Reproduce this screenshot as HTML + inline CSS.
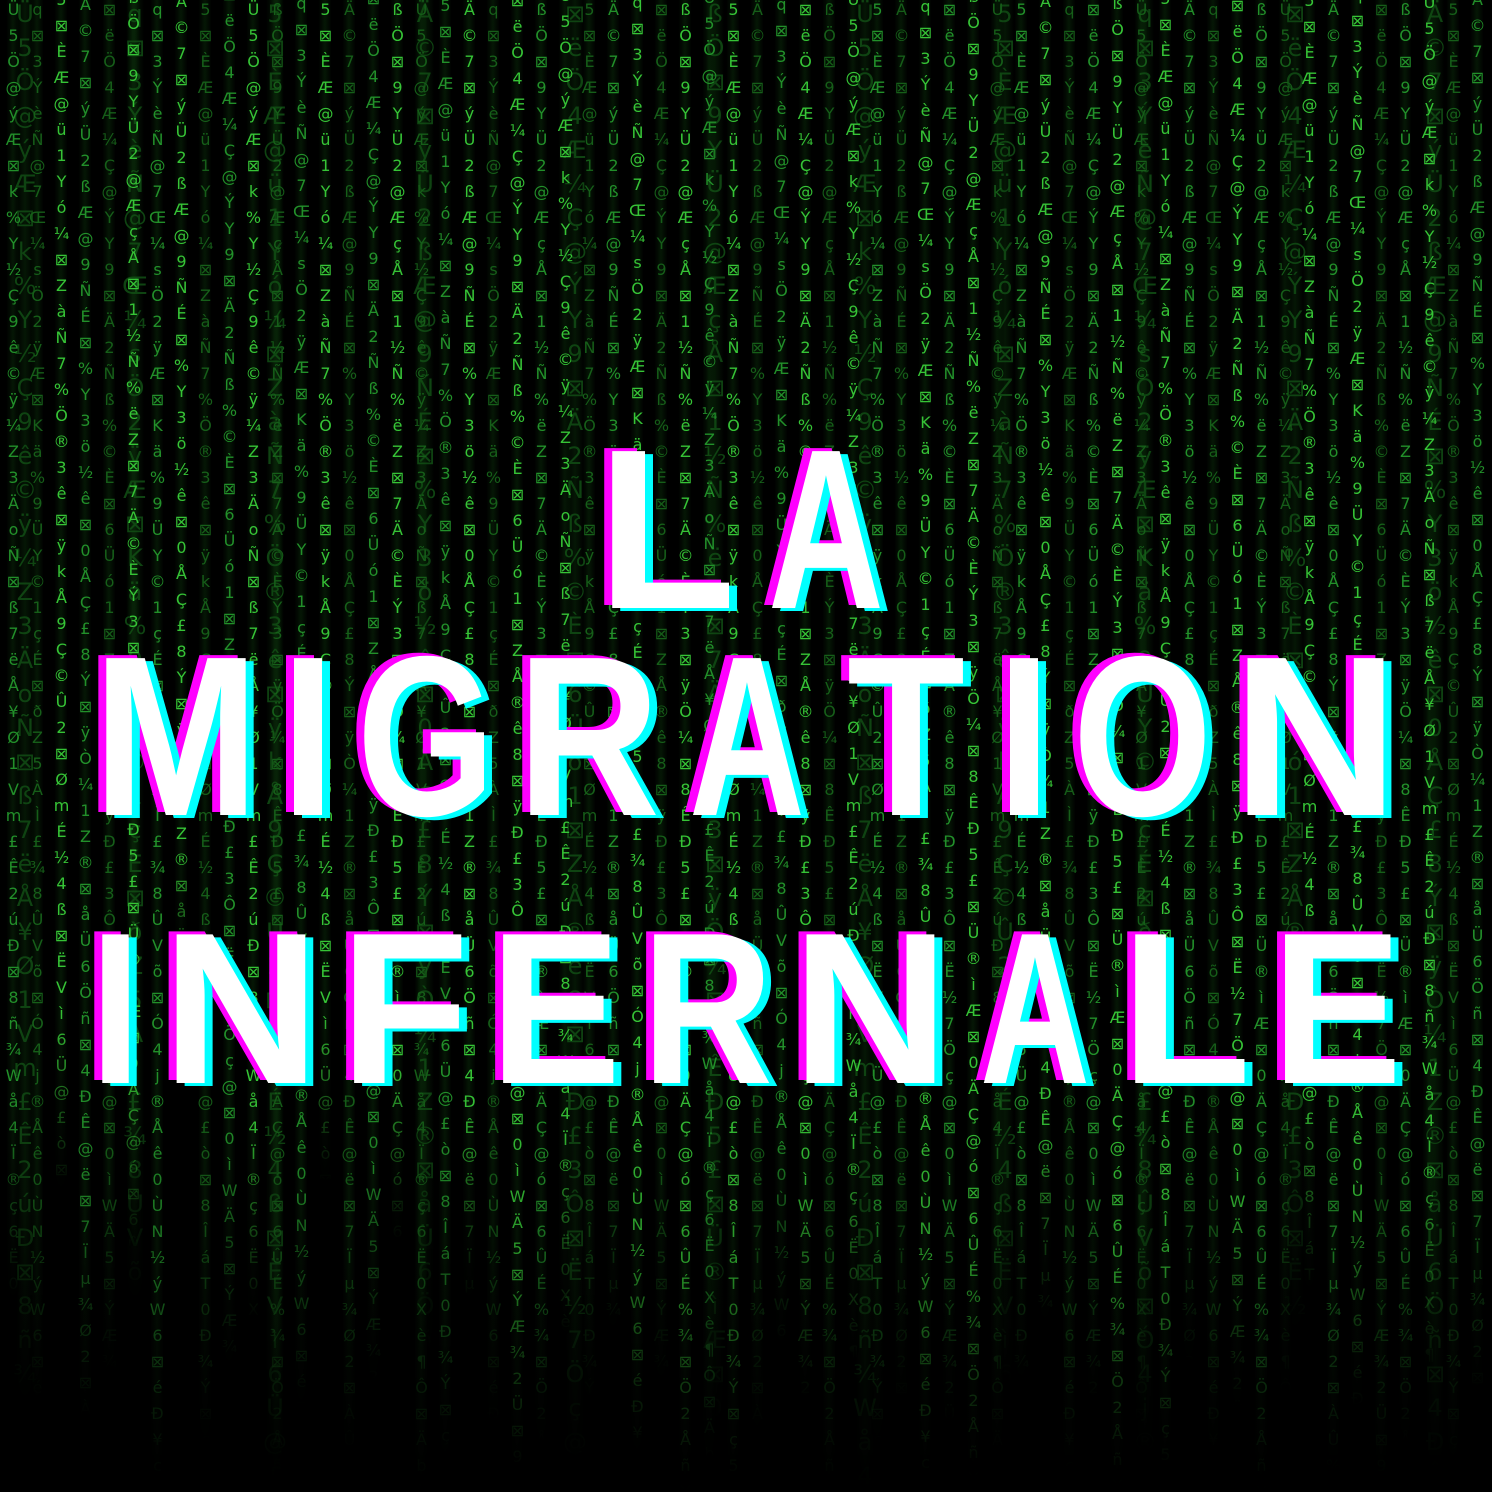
<!DOCTYPE html>
<html><head><meta charset="utf-8">
<style>
html,body{margin:0;padding:0;background:#000;width:1492px;height:1492px;overflow:hidden}
#bg{position:absolute;left:0;top:0;width:1492px;height:1492px;overflow:hidden;background:#000}
.c{position:absolute;top:0;width:22px;writing-mode:vertical-lr;text-orientation:upright;white-space:nowrap;letter-spacing:7px;line-height:22px;font-family:"DejaVu Sans","Liberation Sans",sans-serif;font-size:16px;overflow:hidden;
background:linear-gradient(90deg,transparent 20%,rgba(20,90,20,.25) 50%,transparent 80%);
-webkit-mask-image:linear-gradient(180deg,#000 85%,transparent);mask-image:linear-gradient(180deg,#000 85%,transparent)}
.b{color:#36c436}
.m{color:#22902a}
.d{color:#165e19}
.f{color:#0f4412;font-size:24px;letter-spacing:6px;line-height:30px;width:30px}
#fade{position:absolute;left:0;top:0;width:1492px;height:1492px;background:linear-gradient(180deg,rgba(0,0,0,0) 72%,rgba(0,0,0,.55) 100%)}
svg{position:absolute;left:0;top:0}
svg text{font-family:"Liberation Sans",sans-serif;font-weight:bold}
</style></head><body>
<div id="bg">
<div class="c f" style="left:10px;height:1400px">Ü5Ö@ýÆ⊠k%Y½Ç9ê©ÿ¼Z3ÄoÑ⊠ß7ëÅ¥Ø1Vm£Ê2úÐ⊠8ñ¾Wå4Ï®ç6Ë0Xè</div>
<div class="c f" style="left:120px;height:1300px">q⊠3ÝèÑ@7Œ¼sÖ2ÿÆ⊠Kä%9ÜY©1çÉ⊠ðZ5ÀÌ£¾8ÛVõ⊠Ó4j®Åê0ÙN½ý</div>
<div class="c f" style="left:260px;height:1480px">5⊠ÈÆ@ü1Yó¼⊠ZàÑ7%Ö®3ê⊠ÿkÅ9Ç©Û2⊠ØmÉ½4ß⊠ËVì6Ü@£ò⊠8ÎáT0Ð¾Ý⊠ç5Ä%èW⊠1</div>
<div class="c f" style="left:410px;height:1350px">Ä©7⊠ýÜ2ßÆ@9ÑÉ⊠%Y3ö½ê⊠0ÅÇ£8Ý⊠ÿÒ¼1Z®⊠åÜ6Öñ⊠4ÐÊ@ë⊠7Ïµ¾Ø2⊠ÀÛ%</div>
<div class="c f" style="left:560px;height:1460px">⊠ëÖ4Æ¼Ç@ÝY9⊠Ä2Ñß%©È⊠6Üó1⊠ZÅ®ê8⊠ÿÐ£3Ô⊠Ë½7Öç@⊠0ìWÄ5⊠ÝÆ¾2Ü⊠9</div>
<div class="c f" style="left:700px;height:1420px">ßÖ⊠9YÜ2@ÆçÅ⊠1½Ñ%ëZ⊠7Ä©ÈÝ3⊠ÿÖ¼⊠8ÊÐ5£⊠Ü®ìÆ⊠0ÄÇ@ó⊠6ÛÉ%¾⊠Ö2ÅñY⊠4</div>
<div class="c f" style="left:850px;height:1490px">Ü5Ö@ýÆ⊠k%Y½Ç9ê©ÿ¼Z3ÄoÑ⊠ß7ëÅ¥Ø1Vm£Ê2úÐ⊠8ñ¾Wå4Ï®ç6Ë0Xè¶Ô⊠Äb</div>
<div class="c f" style="left:990px;height:1380px">5⊠ÈÆ@ü1Yó¼⊠ZàÑ7%Ö®3ê⊠ÿkÅ9Ç©Û2⊠ØmÉ½4ß⊠ËVì6Ü@£ò⊠8ÎáT0Ð¾Ý⊠ç5</div>
<div class="c f" style="left:1130px;height:1450px">q⊠3ÝèÑ@7Œ¼sÖ2ÿÆ⊠Kä%9ÜY©1çÉ⊠ðZ5ÀÌ£¾8ÛVõ⊠Ó4j®Åê0ÙN½ýW6⊠é</div>
<div class="c f" style="left:1280px;height:1330px">⊠ëÖ4Æ¼Ç@ÝY9⊠Ä2Ñß%©È⊠6Üó1⊠ZÅ®ê8⊠ÿÐ£3Ô⊠Ë½7Öç@⊠0ìWÄ5⊠Ý</div>
<div class="c f" style="left:1420px;height:1470px">Ä©7⊠ýÜ2ßÆ@9ÑÉ⊠%Y3ö½ê⊠0ÅÇ£8Ý⊠ÿÒ¼1Z®⊠åÜ6Öñ⊠4ÐÊ@ë⊠7Ïµ¾Ø2⊠ÀÛ%Ç9</div>

<div class="c m" style="left:2px;height:1300px">Ü5Ö@ýÆ⊠k%Y½Ç9ê©ÿ¼Z3ÄoÑ⊠ß7ëÅ¥Ø1Vm£Ê2úÐ⊠8ñ¾Wå4Ï®ç6Ë0Xè¶Ô⊠Äbù1Ý%Ÿ8ìÂ©qÈ5⊠ÎTó¼2ÐaÆ7Ü</div>
<div class="c d" style="left:26px;height:1400px">q⊠3ÝèÑ@7Œ¼sÖ2ÿÆ⊠Kä%9ÜY©1çÉ⊠ðZ5ÀÌ£¾8ÛVõ⊠Ó4j®Åê0ÙN½ýW6⊠éÐ¥cÂ2Ï§ò⊠9Ü@xÄ7ÍÆ1ñ⊠Ê3ß</div>
<div class="c b" style="left:50px;height:1200px;top:-10px">5⊠ÈÆ@ü1Yó¼⊠ZàÑ7%Ö®3ê⊠ÿkÅ9Ç©Û2⊠ØmÉ½4ß⊠ËVì6Ü@£ò⊠8ÎáT0Ð¾Ý⊠ç5Ä%èW⊠1ÔÆ¥û3⊠Zñ©Ö7ß⊠</div>
<div class="c m" style="left:74px;height:1420px;top:-5px">Ä©7⊠ýÜ2ßÆ@9ÑÉ⊠%Y3ö½ê⊠0ÅÇ£8Ý⊠ÿÒ¼1Z®⊠åÜ6Öñ⊠4ÐÊ@ë⊠7Ïµ¾Ø2⊠ÀÛ%Ç9⊠kÆ5è©⊠Ü1Ü5Ö@ýÆ⊠</div>
<div class="c d" style="left:98px;height:1370px">⊠ëÖ4Æ¼Ç@ÝY9⊠Ä2Ñß%©È⊠6Üó1⊠ZÅ®ê8⊠ÿÐ£3Ô⊠Ë½7Öç@⊠0ìWÄ5⊠ÝÆ¾2Ü⊠9ÏñÆ%⊠ØË4q⊠3ÝèÑ@7</div>
<div class="c b" style="left:122px;height:1260px;top:-12px">ßÖ⊠9YÜ2@ÆçÅ⊠1½Ñ%ëZ⊠7Ä©ÈÝ3⊠ÿÖ¼⊠8ÊÐ5£⊠Ü®ìÆ⊠0ÄÇ@ó⊠6ÛÉ%¾⊠Ö2ÅñY⊠4Ü5Ö@ýÆ⊠k%Y½Ç</div>
<div class="c m" style="left:146px;height:1480px">q⊠3ÝèÑ@7Œ¼sÖ2ÿÆ⊠Kä%9ÜY©1çÉ⊠ðZ5ÀÌ£¾8ÛVõ⊠Ó4j®Åê0ÙN½ýW6⊠éÐ¥cÂ2Ï§ò⊠9Ü@xÄ7ÍÆ1ñ⊠Ê3ß</div>
<div class="c b" style="left:170px;height:1000px;top:-8px">Ä©7⊠ýÜ2ßÆ@9ÑÉ⊠%Y3ö½ê⊠0ÅÇ£8Ý⊠ÿÒ¼1Z®⊠åÜ6Öñ⊠4ÐÊ@ë⊠7Ïµ¾Ø2⊠ÀÛ%Ç9</div>
<div class="c d" style="left:194px;height:1440px">5⊠ÈÆ@ü1Yó¼⊠ZàÑ7%Ö®3ê⊠ÿkÅ9Ç©Û2⊠ØmÉ½4ß⊠ËVì6Ü@£ò⊠8ÎáT0Ð¾Ý⊠ç5Ä%èW⊠1ÔÆ¥û3⊠Zñ©Ö7ß⊠</div>
<div class="c m" style="left:218px;height:1380px;top:-15px">⊠ëÖ4Æ¼Ç@ÝY9⊠Ä2Ñß%©È⊠6Üó1⊠ZÅ®ê8⊠ÿÐ£3Ô⊠Ë½7Öç@⊠0ìWÄ5⊠ÝÆ¾2Ü⊠9ÏñÆ%⊠ØË4ßÖ⊠9YÜ2@</div>
<div class="c b" style="left:242px;height:1320px">Ü5Ö@ýÆ⊠k%Y½Ç9ê©ÿ¼Z3ÄoÑ⊠ß7ëÅ¥Ø1Vm£Ê2úÐ⊠8ñ¾Wå4Ï®ç6Ë0Xè¶Ô⊠Äbù1Ý%Ÿ8ìÂ©qÈ5⊠ÎTó¼</div>
<div class="c d" style="left:266px;height:1470px">ßÖ⊠9YÜ2@ÆçÅ⊠1½Ñ%ëZ⊠7Ä©ÈÝ3⊠ÿÖ¼⊠8ÊÐ5£⊠Ü®ìÆ⊠0ÄÇ@ó⊠6ÛÉ%¾⊠Ö2ÅñY⊠4Ä©7⊠ýÜ2ßÆ@9</div>
<div class="c m" style="left:290px;height:1410px;top:-6px">q⊠3ÝèÑ@7Œ¼sÖ2ÿÆ⊠Kä%9ÜY©1çÉ⊠ðZ5ÀÌ£¾8ÛVõ⊠Ó4j®Åê0ÙN½ýW6⊠éÐ¥cÂ2Ï§ò⊠9Ü@xÄ7ÍÆ1ñ⊠</div>
<div class="c b" style="left:314px;height:1180px">5⊠ÈÆ@ü1Yó¼⊠ZàÑ7%Ö®3ê⊠ÿkÅ9Ç©Û2⊠ØmÉ½4ß⊠ËVì6Ü@£ò⊠8ÎáT0Ð¾Ý⊠ç5Ä%èW⊠1ÔÆ¥û3</div>
<div class="c d" style="left:338px;height:1450px">Ä©7⊠ýÜ2ßÆ@9ÑÉ⊠%Y3ö½ê⊠0ÅÇ£8Ý⊠ÿÒ¼1Z®⊠åÜ6Öñ⊠4ÐÊ@ë⊠7Ïµ¾Ø2⊠ÀÛ%Ç9⊠kÆ5è©⊠Ü1ßÖ⊠9Y</div>
<div class="c m" style="left:362px;height:1390px;top:-11px">⊠ëÖ4Æ¼Ç@ÝY9⊠Ä2Ñß%©È⊠6Üó1⊠ZÅ®ê8⊠ÿÐ£3Ô⊠Ë½7Öç@⊠0ìWÄ5⊠ÝÆ¾2Ü⊠9ÏñÆ%⊠ØË4Ü5Ö@ýÆ⊠</div>
<div class="c b" style="left:386px;height:1240px">ßÖ⊠9YÜ2@ÆçÅ⊠1½Ñ%ëZ⊠7Ä©ÈÝ3⊠ÿÖ¼⊠8ÊÐ5£⊠Ü®ìÆ⊠0ÄÇ@ó⊠6ÛÉ%¾⊠Ö2ÅñY⊠4q⊠3ÝèÑ@7Œ</div>
<div class="c d" style="left:410px;height:1490px">Ü5Ö@ýÆ⊠k%Y½Ç9ê©ÿ¼Z3ÄoÑ⊠ß7ëÅ¥Ø1Vm£Ê2úÐ⊠8ñ¾Wå4Ï®ç6Ë0Xè¶Ô⊠Äbù1Ý%Ÿ8ìÂ©qÈ5⊠ÎTó¼2ÐaÆ7Ü</div>
<div class="c m" style="left:434px;height:1460px;top:-4px">5⊠ÈÆ@ü1Yó¼⊠ZàÑ7%Ö®3ê⊠ÿkÅ9Ç©Û2⊠ØmÉ½4ß⊠ËVì6Ü@£ò⊠8ÎáT0Ð¾Ý⊠ç5Ä%èW⊠1ÔÆ¥û3⊠Zñ©Ö7ß⊠</div>
<div class="c b" style="left:458px;height:1300px">Ä©7⊠ýÜ2ßÆ@9ÑÉ⊠%Y3ö½ê⊠0ÅÇ£8Ý⊠ÿÒ¼1Z®⊠åÜ6Öñ⊠4ÐÊ@ë⊠7Ïµ¾Ø2⊠ÀÛ%Ç9⊠kÆ5è©⊠</div>
<div class="c d" style="left:482px;height:1420px">q⊠3ÝèÑ@7Œ¼sÖ2ÿÆ⊠Kä%9ÜY©1çÉ⊠ðZ5ÀÌ£¾8ÛVõ⊠Ó4j®Åê0ÙN½ýW6⊠éÐ¥cÂ2Ï§ò⊠9Ü@xÄ7ÍÆ1ñ⊠Ê3ß</div>
<div class="c b" style="left:506px;height:1480px;top:-9px">⊠ëÖ4Æ¼Ç@ÝY9⊠Ä2Ñß%©È⊠6Üó1⊠ZÅ®ê8⊠ÿÐ£3Ô⊠Ë½7Öç@⊠0ìWÄ5⊠ÝÆ¾2Ü⊠9ÏñÆ%⊠ØË4ßÖ⊠9YÜ2@</div>
<div class="c m" style="left:530px;height:1440px">ßÖ⊠9YÜ2@ÆçÅ⊠1½Ñ%ëZ⊠7Ä©ÈÝ3⊠ÿÖ¼⊠8ÊÐ5£⊠Ü®ìÆ⊠0ÄÇ@ó⊠6ÛÉ%¾⊠Ö2ÅñY⊠4Ü5Ö@ýÆ⊠k%Y½Ç</div>
<div class="c b" style="left:554px;height:1350px;top:-14px">Ü5Ö@ýÆ⊠k%Y½Ç9ê©ÿ¼Z3ÄoÑ⊠ß7ëÅ¥Ø1Vm£Ê2úÐ⊠8ñ¾Wå4Ï®ç6Ë0Xè¶Ô⊠Äbù1Ý%Ÿ8ìÂ©qÈ5⊠ÎTó¼2Ð</div>
<div class="c d" style="left:578px;height:1400px">5⊠ÈÆ@ü1Yó¼⊠ZàÑ7%Ö®3ê⊠ÿkÅ9Ç©Û2⊠ØmÉ½4ß⊠ËVì6Ü@£ò⊠8ÎáT0Ð¾Ý⊠ç5Ä%èW⊠1ÔÆ¥û3⊠Zñ©Ö7ß⊠</div>
<div class="c m" style="left:602px;height:1330px">Ä©7⊠ýÜ2ßÆ@9ÑÉ⊠%Y3ö½ê⊠0ÅÇ£8Ý⊠ÿÒ¼1Z®⊠åÜ6Öñ⊠4ÐÊ@ë⊠7Ïµ¾Ø2⊠ÀÛ%Ç9⊠kÆ5è©⊠Ü1q⊠3Ýè</div>
<div class="c b" style="left:626px;height:1460px;top:-7px">q⊠3ÝèÑ@7Œ¼sÖ2ÿÆ⊠Kä%9ÜY©1çÉ⊠ðZ5ÀÌ£¾8ÛVõ⊠Ó4j®Åê0ÙN½ýW6⊠éÐ¥cÂ2Ï§ò⊠9Ü@xÄ7ÍÆ1ñ⊠</div>
<div class="c d" style="left:650px;height:1380px">⊠ëÖ4Æ¼Ç@ÝY9⊠Ä2Ñß%©È⊠6Üó1⊠ZÅ®ê8⊠ÿÐ£3Ô⊠Ë½7Öç@⊠0ìWÄ5⊠ÝÆ¾2Ü⊠9ÏñÆ%⊠ØË4Ü5Ö@ýÆ⊠</div>
<div class="c b" style="left:674px;height:1490px">ßÖ⊠9YÜ2@ÆçÅ⊠1½Ñ%ëZ⊠7Ä©ÈÝ3⊠ÿÖ¼⊠8ÊÐ5£⊠Ü®ìÆ⊠0ÄÇ@ó⊠6ÛÉ%¾⊠Ö2ÅñY⊠4Ä©7⊠ýÜ2ßÆ@9</div>
<div class="c m" style="left:698px;height:1470px;top:-12px">Ü5Ö@ýÆ⊠k%Y½Ç9ê©ÿ¼Z3ÄoÑ⊠ß7ëÅ¥Ø1Vm£Ê2úÐ⊠8ñ¾Wå4Ï®ç6Ë0Xè¶Ô⊠Äbù1Ý%Ÿ8ìÂ©qÈ5⊠ÎTó¼</div>
<div class="c b" style="left:722px;height:1480px">5⊠ÈÆ@ü1Yó¼⊠ZàÑ7%Ö®3ê⊠ÿkÅ9Ç©Û2⊠ØmÉ½4ß⊠ËVì6Ü@£ò⊠8ÎáT0Ð¾Ý⊠ç5Ä%èW⊠1ÔÆ¥û3⊠Zñ©Ö7ß⊠</div>
<div class="c d" style="left:746px;height:1430px">Ä©7⊠ýÜ2ßÆ@9ÑÉ⊠%Y3ö½ê⊠0ÅÇ£8Ý⊠ÿÒ¼1Z®⊠åÜ6Öñ⊠4ÐÊ@ë⊠7Ïµ¾Ø2⊠ÀÛ%Ç9⊠kÆ5è©⊠Ü1ßÖ⊠9Y</div>
<div class="c m" style="left:770px;height:1350px;top:-5px">q⊠3ÝèÑ@7Œ¼sÖ2ÿÆ⊠Kä%9ÜY©1çÉ⊠ðZ5ÀÌ£¾8ÛVõ⊠Ó4j®Åê0ÙN½ýW6⊠éÐ¥cÂ2Ï§ò⊠9Ü@xÄ7ÍÆ1ñ⊠Ê3ß</div>
<div class="c b" style="left:794px;height:1400px">⊠ëÖ4Æ¼Ç@ÝY9⊠Ä2Ñß%©È⊠6Üó1⊠ZÅ®ê8⊠ÿÐ£3Ô⊠Ë½7Öç@⊠0ìWÄ5⊠ÝÆ¾2Ü⊠9ÏñÆ%⊠ØË4ßÖ⊠9YÜ2@</div>
<div class="c d" style="left:818px;height:1490px">ßÖ⊠9YÜ2@ÆçÅ⊠1½Ñ%ëZ⊠7Ä©ÈÝ3⊠ÿÖ¼⊠8ÊÐ5£⊠Ü®ìÆ⊠0ÄÇ@ó⊠6ÛÉ%¾⊠Ö2ÅñY⊠4Ü5Ö@ýÆ⊠k%Y½Ç</div>
<div class="c b" style="left:842px;height:1370px;top:-10px">Ü5Ö@ýÆ⊠k%Y½Ç9ê©ÿ¼Z3ÄoÑ⊠ß7ëÅ¥Ø1Vm£Ê2úÐ⊠8ñ¾Wå4Ï®ç6Ë0Xè¶Ô⊠Äbù1Ý%Ÿ8ìÂ©qÈ5⊠ÎTó¼2Ð</div>
<div class="c m" style="left:866px;height:1440px">5⊠ÈÆ@ü1Yó¼⊠ZàÑ7%Ö®3ê⊠ÿkÅ9Ç©Û2⊠ØmÉ½4ß⊠ËVì6Ü@£ò⊠8ÎáT0Ð¾Ý⊠ç5Ä%èW⊠1ÔÆ¥û3⊠Zñ©Ö7ß⊠</div>
<div class="c d" style="left:890px;height:1400px">Ä©7⊠ýÜ2ßÆ@9ÑÉ⊠%Y3ö½ê⊠0ÅÇ£8Ý⊠ÿÒ¼1Z®⊠åÜ6Öñ⊠4ÐÊ@ë⊠7Ïµ¾Ø2⊠ÀÛ%Ç9⊠kÆ5è©⊠Ü1q⊠3Ýè</div>
<div class="c b" style="left:914px;height:1480px;top:-3px">q⊠3ÝèÑ@7Œ¼sÖ2ÿÆ⊠Kä%9ÜY©1çÉ⊠ðZ5ÀÌ£¾8ÛVõ⊠Ó4j®Åê0ÙN½ýW6⊠éÐ¥cÂ2Ï§ò⊠9Ü@xÄ7ÍÆ1ñ⊠</div>
<div class="c m" style="left:938px;height:1420px">⊠ëÖ4Æ¼Ç@ÝY9⊠Ä2Ñß%©È⊠6Üó1⊠ZÅ®ê8⊠ÿÐ£3Ô⊠Ë½7Öç@⊠0ìWÄ5⊠ÝÆ¾2Ü⊠9ÏñÆ%⊠ØË4Ü5Ö@ýÆ⊠</div>
<div class="c b" style="left:962px;height:1490px;top:-13px">ßÖ⊠9YÜ2@ÆçÅ⊠1½Ñ%ëZ⊠7Ä©ÈÝ3⊠ÿÖ¼⊠8ÊÐ5£⊠Ü®ìÆ⊠0ÄÇ@ó⊠6ÛÉ%¾⊠Ö2ÅñY⊠4Ä©7⊠ýÜ2ßÆ@9</div>
<div class="c d" style="left:986px;height:1450px">Ü5Ö@ýÆ⊠k%Y½Ç9ê©ÿ¼Z3ÄoÑ⊠ß7ëÅ¥Ø1Vm£Ê2úÐ⊠8ñ¾Wå4Ï®ç6Ë0Xè¶Ô⊠Äbù1Ý%Ÿ8ìÂ©qÈ5⊠ÎTó¼</div>
<div class="c m" style="left:1010px;height:1380px">5⊠ÈÆ@ü1Yó¼⊠ZàÑ7%Ö®3ê⊠ÿkÅ9Ç©Û2⊠ØmÉ½4ß⊠ËVì6Ü@£ò⊠8ÎáT0Ð¾Ý⊠ç5Ä%èW⊠1ÔÆ¥û3⊠Zñ©Ö7ß⊠</div>
<div class="c b" style="left:1034px;height:1330px;top:-8px">Ä©7⊠ýÜ2ßÆ@9ÑÉ⊠%Y3ö½ê⊠0ÅÇ£8Ý⊠ÿÒ¼1Z®⊠åÜ6Öñ⊠4ÐÊ@ë⊠7Ïµ¾Ø2⊠ÀÛ%Ç9⊠kÆ5è©⊠Ü1ßÖ⊠9Y</div>
<div class="c d" style="left:1058px;height:1470px">q⊠3ÝèÑ@7Œ¼sÖ2ÿÆ⊠Kä%9ÜY©1çÉ⊠ðZ5ÀÌ£¾8ÛVõ⊠Ó4j®Åê0ÙN½ýW6⊠éÐ¥cÂ2Ï§ò⊠9Ü@xÄ7ÍÆ1ñ⊠Ê3ß</div>
<div class="c m" style="left:1082px;height:1400px">⊠ëÖ4Æ¼Ç@ÝY9⊠Ä2Ñß%©È⊠6Üó1⊠ZÅ®ê8⊠ÿÐ£3Ô⊠Ë½7Öç@⊠0ìWÄ5⊠ÝÆ¾2Ü⊠9ÏñÆ%⊠ØË4ßÖ⊠9YÜ2@</div>
<div class="c b" style="left:1106px;height:1490px;top:-6px">ßÖ⊠9YÜ2@ÆçÅ⊠1½Ñ%ëZ⊠7Ä©ÈÝ3⊠ÿÖ¼⊠8ÊÐ5£⊠Ü®ìÆ⊠0ÄÇ@ó⊠6ÛÉ%¾⊠Ö2ÅñY⊠4Ü5Ö@ýÆ⊠k%Y½Ç</div>
<div class="c d" style="left:1130px;height:1420px">Ü5Ö@ýÆ⊠k%Y½Ç9ê©ÿ¼Z3ÄoÑ⊠ß7ëÅ¥Ø1Vm£Ê2úÐ⊠8ñ¾Wå4Ï®ç6Ë0Xè¶Ô⊠Äbù1Ý%Ÿ8ìÂ©qÈ5⊠ÎTó¼2Ð</div>
<div class="c b" style="left:1154px;height:1480px;top:-11px">5⊠ÈÆ@ü1Yó¼⊠ZàÑ7%Ö®3ê⊠ÿkÅ9Ç©Û2⊠ØmÉ½4ß⊠ËVì6Ü@£ò⊠8ÎáT0Ð¾Ý⊠ç5Ä%èW⊠1ÔÆ¥û3⊠Zñ©Ö7ß⊠</div>
<div class="c m" style="left:1178px;height:1360px">Ä©7⊠ýÜ2ßÆ@9ÑÉ⊠%Y3ö½ê⊠0ÅÇ£8Ý⊠ÿÒ¼1Z®⊠åÜ6Öñ⊠4ÐÊ@ë⊠7Ïµ¾Ø2⊠ÀÛ%Ç9⊠kÆ5è©⊠Ü1q⊠3Ýè</div>
<div class="c d" style="left:1202px;height:1450px">q⊠3ÝèÑ@7Œ¼sÖ2ÿÆ⊠Kä%9ÜY©1çÉ⊠ðZ5ÀÌ£¾8ÛVõ⊠Ó4j®Åê0ÙN½ýW6⊠éÐ¥cÂ2Ï§ò⊠9Ü@xÄ7ÍÆ1ñ⊠</div>
<div class="c b" style="left:1226px;height:1410px;top:-4px">⊠ëÖ4Æ¼Ç@ÝY9⊠Ä2Ñß%©È⊠6Üó1⊠ZÅ®ê8⊠ÿÐ£3Ô⊠Ë½7Öç@⊠0ìWÄ5⊠ÝÆ¾2Ü⊠9ÏñÆ%⊠ØË4Ü5Ö@ýÆ⊠</div>
<div class="c m" style="left:1250px;height:1490px">ßÖ⊠9YÜ2@ÆçÅ⊠1½Ñ%ëZ⊠7Ä©ÈÝ3⊠ÿÖ¼⊠8ÊÐ5£⊠Ü®ìÆ⊠0ÄÇ@ó⊠6ÛÉ%¾⊠Ö2ÅñY⊠4Ä©7⊠ýÜ2ßÆ@9</div>
<div class="c d" style="left:1274px;height:1390px">Ü5Ö@ýÆ⊠k%Y½Ç9ê©ÿ¼Z3ÄoÑ⊠ß7ëÅ¥Ø1Vm£Ê2úÐ⊠8ñ¾Wå4Ï®ç6Ë0Xè¶Ô⊠Äbù1Ý%Ÿ8ìÂ©qÈ5⊠ÎTó¼</div>
<div class="c b" style="left:1298px;height:1300px;top:-9px">5⊠ÈÆ@ü1Yó¼⊠ZàÑ7%Ö®3ê⊠ÿkÅ9Ç©Û2⊠ØmÉ½4ß⊠ËVì6Ü@£ò⊠8ÎáT0Ð¾Ý⊠ç5Ä%èW⊠1ÔÆ¥û3⊠Zñ©Ö7ß⊠</div>
<div class="c m" style="left:1322px;height:1470px">Ä©7⊠ýÜ2ßÆ@9ÑÉ⊠%Y3ö½ê⊠0ÅÇ£8Ý⊠ÿÒ¼1Z®⊠åÜ6Öñ⊠4ÐÊ@ë⊠7Ïµ¾Ø2⊠ÀÛ%Ç9⊠kÆ5è©⊠Ü1ßÖ⊠9Y</div>
<div class="c b" style="left:1346px;height:1420px;top:-15px">q⊠3ÝèÑ@7Œ¼sÖ2ÿÆ⊠Kä%9ÜY©1çÉ⊠ðZ5ÀÌ£¾8ÛVõ⊠Ó4j®Åê0ÙN½ýW6⊠éÐ¥cÂ2Ï§ò⊠9Ü@xÄ7ÍÆ1ñ⊠Ê3ß</div>
<div class="c d" style="left:1370px;height:1480px">⊠ëÖ4Æ¼Ç@ÝY9⊠Ä2Ñß%©È⊠6Üó1⊠ZÅ®ê8⊠ÿÐ£3Ô⊠Ë½7Öç@⊠0ìWÄ5⊠ÝÆ¾2Ü⊠9ÏñÆ%⊠ØË4ßÖ⊠9YÜ2@</div>
<div class="c m" style="left:1394px;height:1440px">ßÖ⊠9YÜ2@ÆçÅ⊠1½Ñ%ëZ⊠7Ä©ÈÝ3⊠ÿÖ¼⊠8ÊÐ5£⊠Ü®ìÆ⊠0ÄÇ@ó⊠6ÛÉ%¾⊠Ö2ÅñY⊠4Ü5Ö@ýÆ⊠k%Y½Ç</div>
<div class="c b" style="left:1418px;height:1380px;top:-7px">Ü5Ö@ýÆ⊠k%Y½Ç9ê©ÿ¼Z3ÄoÑ⊠ß7ëÅ¥Ø1Vm£Ê2úÐ⊠8ñ¾Wå4Ï®ç6Ë0Xè¶Ô⊠Äbù1Ý%Ÿ8ìÂ©qÈ5⊠ÎTó¼2Ð</div>
<div class="c d" style="left:1442px;height:1460px">5⊠ÈÆ@ü1Yó¼⊠ZàÑ7%Ö®3ê⊠ÿkÅ9Ç©Û2⊠ØmÉ½4ß⊠ËVì6Ü@£ò⊠8ÎáT0Ð¾Ý⊠ç5Ä%èW⊠1ÔÆ¥û3⊠Zñ©Ö7ß⊠</div>
<div class="c m" style="left:1466px;height:1400px;top:-10px">Ä©7⊠ýÜ2ßÆ@9ÑÉ⊠%Y3ö½ê⊠0ÅÇ£8Ý⊠ÿÒ¼1Z®⊠åÜ6Öñ⊠4ÐÊ@ë⊠7Ïµ¾Ø2⊠ÀÛ%Ç9⊠kÆ5è©⊠Ü1q⊠3Ýè</div>
<div id="fade"></div>
</div>

<svg width="1492" height="1492" viewBox="0 0 1492 1492">
<g fill="#ff00ff" transform="translate(-8,-3)">
 <text x="597" y="608" font-size="228" textLength="139" lengthAdjust="spacingAndGlyphs">L</text>
 <text x="768" y="608" font-size="228" textLength="116" lengthAdjust="spacingAndGlyphs">A</text>
 <text x="93" y="815" font-size="228" textLength="166" lengthAdjust="spacingAndGlyphs">M</text>
 <text x="281" y="815" font-size="228" textLength="54" lengthAdjust="spacingAndGlyphs">I</text>
 <text x="357" y="815" font-size="228" textLength="138" lengthAdjust="spacingAndGlyphs">G</text>
 <text x="517" y="815" font-size="228" textLength="143" lengthAdjust="spacingAndGlyphs">R</text>
 <text x="689" y="815" font-size="228" textLength="116" lengthAdjust="spacingAndGlyphs">A</text>
 <text x="847" y="815" font-size="228" textLength="118" lengthAdjust="spacingAndGlyphs">T</text>
 <text x="997" y="815" font-size="228" textLength="54" lengthAdjust="spacingAndGlyphs">I</text>
 <text x="1073" y="815" font-size="228" textLength="139" lengthAdjust="spacingAndGlyphs">O</text>
 <text x="1232" y="815" font-size="228" textLength="167" lengthAdjust="spacingAndGlyphs">N</text>
 <text x="90" y="1083" font-size="216" textLength="51" lengthAdjust="spacingAndGlyphs">I</text>
 <text x="162" y="1083" font-size="216" textLength="158" lengthAdjust="spacingAndGlyphs">N</text>
 <text x="340" y="1083" font-size="216" textLength="129" lengthAdjust="spacingAndGlyphs">F</text>
 <text x="490" y="1083" font-size="216" textLength="131" lengthAdjust="spacingAndGlyphs">E</text>
 <text x="642" y="1083" font-size="216" textLength="131" lengthAdjust="spacingAndGlyphs">R</text>
 <text x="792" y="1083" font-size="216" textLength="157" lengthAdjust="spacingAndGlyphs">N</text>
 <text x="980" y="1083" font-size="216" textLength="110" lengthAdjust="spacingAndGlyphs">A</text>
 <text x="1121" y="1083" font-size="216" textLength="130" lengthAdjust="spacingAndGlyphs">L</text>
 <text x="1272" y="1083" font-size="216" textLength="130" lengthAdjust="spacingAndGlyphs">E</text>
</g>
<g fill="#00ffff" transform="translate(8,3)">
 <text x="597" y="608" font-size="228" textLength="139" lengthAdjust="spacingAndGlyphs">L</text>
 <text x="768" y="608" font-size="228" textLength="116" lengthAdjust="spacingAndGlyphs">A</text>
 <text x="93" y="815" font-size="228" textLength="166" lengthAdjust="spacingAndGlyphs">M</text>
 <text x="281" y="815" font-size="228" textLength="54" lengthAdjust="spacingAndGlyphs">I</text>
 <text x="357" y="815" font-size="228" textLength="138" lengthAdjust="spacingAndGlyphs">G</text>
 <text x="517" y="815" font-size="228" textLength="143" lengthAdjust="spacingAndGlyphs">R</text>
 <text x="689" y="815" font-size="228" textLength="116" lengthAdjust="spacingAndGlyphs">A</text>
 <text x="847" y="815" font-size="228" textLength="118" lengthAdjust="spacingAndGlyphs">T</text>
 <text x="997" y="815" font-size="228" textLength="54" lengthAdjust="spacingAndGlyphs">I</text>
 <text x="1073" y="815" font-size="228" textLength="139" lengthAdjust="spacingAndGlyphs">O</text>
 <text x="1232" y="815" font-size="228" textLength="167" lengthAdjust="spacingAndGlyphs">N</text>
 <text x="90" y="1083" font-size="216" textLength="51" lengthAdjust="spacingAndGlyphs">I</text>
 <text x="162" y="1083" font-size="216" textLength="158" lengthAdjust="spacingAndGlyphs">N</text>
 <text x="340" y="1083" font-size="216" textLength="129" lengthAdjust="spacingAndGlyphs">F</text>
 <text x="490" y="1083" font-size="216" textLength="131" lengthAdjust="spacingAndGlyphs">E</text>
 <text x="642" y="1083" font-size="216" textLength="131" lengthAdjust="spacingAndGlyphs">R</text>
 <text x="792" y="1083" font-size="216" textLength="157" lengthAdjust="spacingAndGlyphs">N</text>
 <text x="980" y="1083" font-size="216" textLength="110" lengthAdjust="spacingAndGlyphs">A</text>
 <text x="1121" y="1083" font-size="216" textLength="130" lengthAdjust="spacingAndGlyphs">L</text>
 <text x="1272" y="1083" font-size="216" textLength="130" lengthAdjust="spacingAndGlyphs">E</text>
</g>
<g fill="#ffffff">
 <text x="597" y="608" font-size="228" textLength="139" lengthAdjust="spacingAndGlyphs">L</text>
 <text x="768" y="608" font-size="228" textLength="116" lengthAdjust="spacingAndGlyphs">A</text>
 <text x="93" y="815" font-size="228" textLength="166" lengthAdjust="spacingAndGlyphs">M</text>
 <text x="281" y="815" font-size="228" textLength="54" lengthAdjust="spacingAndGlyphs">I</text>
 <text x="357" y="815" font-size="228" textLength="138" lengthAdjust="spacingAndGlyphs">G</text>
 <text x="517" y="815" font-size="228" textLength="143" lengthAdjust="spacingAndGlyphs">R</text>
 <text x="689" y="815" font-size="228" textLength="116" lengthAdjust="spacingAndGlyphs">A</text>
 <text x="847" y="815" font-size="228" textLength="118" lengthAdjust="spacingAndGlyphs">T</text>
 <text x="997" y="815" font-size="228" textLength="54" lengthAdjust="spacingAndGlyphs">I</text>
 <text x="1073" y="815" font-size="228" textLength="139" lengthAdjust="spacingAndGlyphs">O</text>
 <text x="1232" y="815" font-size="228" textLength="167" lengthAdjust="spacingAndGlyphs">N</text>
 <text x="90" y="1083" font-size="216" textLength="51" lengthAdjust="spacingAndGlyphs">I</text>
 <text x="162" y="1083" font-size="216" textLength="158" lengthAdjust="spacingAndGlyphs">N</text>
 <text x="340" y="1083" font-size="216" textLength="129" lengthAdjust="spacingAndGlyphs">F</text>
 <text x="490" y="1083" font-size="216" textLength="131" lengthAdjust="spacingAndGlyphs">E</text>
 <text x="642" y="1083" font-size="216" textLength="131" lengthAdjust="spacingAndGlyphs">R</text>
 <text x="792" y="1083" font-size="216" textLength="157" lengthAdjust="spacingAndGlyphs">N</text>
 <text x="980" y="1083" font-size="216" textLength="110" lengthAdjust="spacingAndGlyphs">A</text>
 <text x="1121" y="1083" font-size="216" textLength="130" lengthAdjust="spacingAndGlyphs">L</text>
 <text x="1272" y="1083" font-size="216" textLength="130" lengthAdjust="spacingAndGlyphs">E</text>
</g>
</svg>
</body></html>
